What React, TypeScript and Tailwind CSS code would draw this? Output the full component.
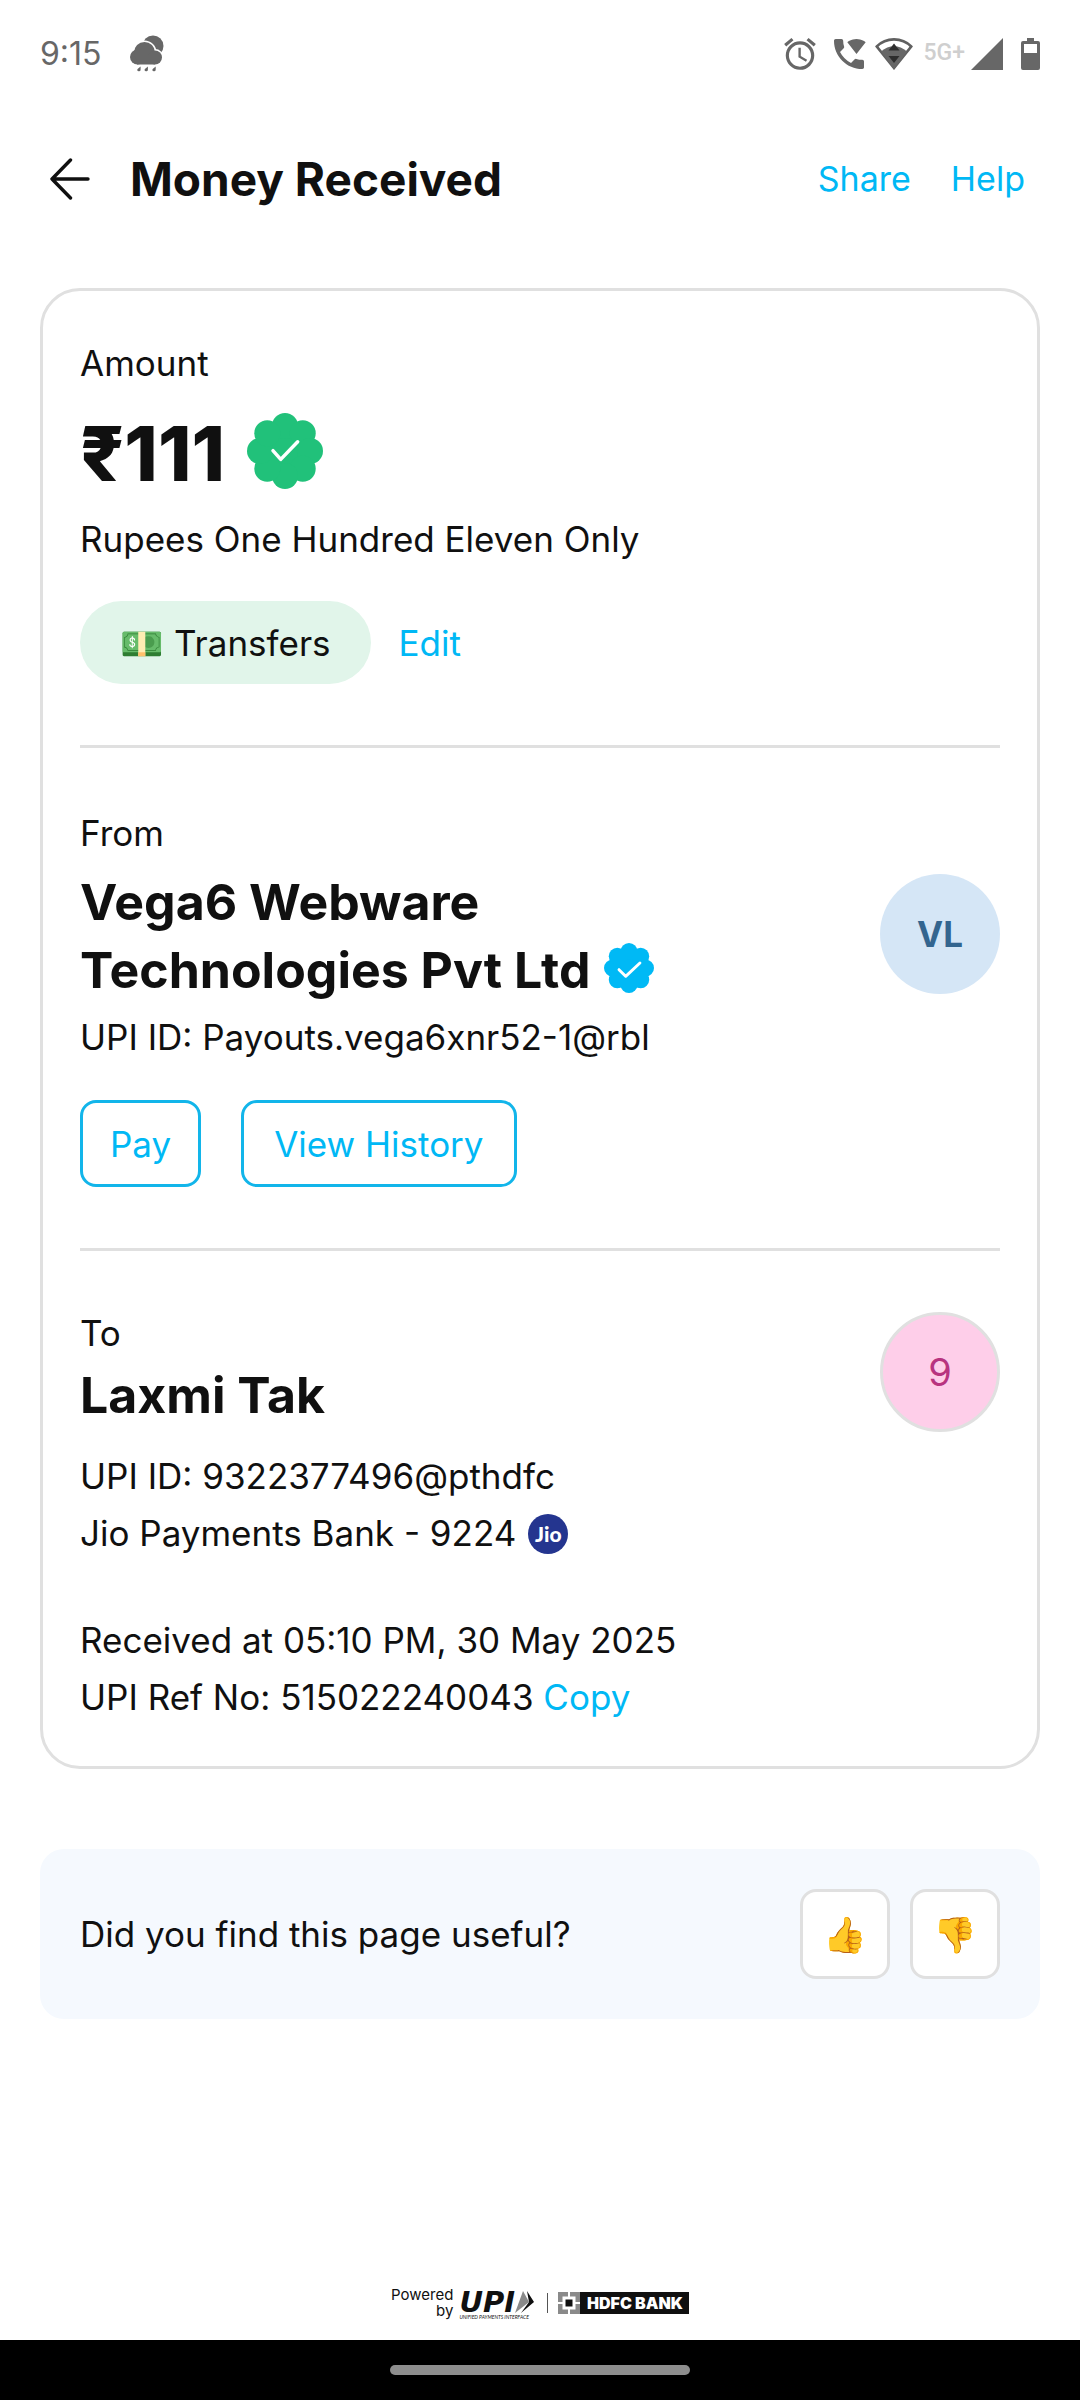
import React from "react";
import { MdAlarm, MdWifiCalling } from "react-icons/md";

function WeatherIcon() {
  return (
    <svg viewBox="0 0 34 38" className="h-[38px] w-[34px]" fill="#676767" aria-hidden="true">
      <circle cx="23" cy="11" r="10.5" />
      <g stroke="#fff" strokeWidth="3">
        <circle cx="14.5" cy="17.5" r="10.5" />
        <circle cx="25" cy="22.5" r="7" />
      </g>
      <circle cx="7.5" cy="22" r="7.5" />
      <circle cx="14.5" cy="17.5" r="10.5" />
      <circle cx="25" cy="22.5" r="7" />
      <rect x="7" y="20" width="18" height="9.5" />
      <path d="M10.6 31.5v3a1.6 1.6 0 1 1-3-.6zM17.9 31.5v3a1.6 1.6 0 1 1-3-.6zM25.7 31.5v3a1.6 1.6 0 1 1-3-.6z" />
    </svg>
  );
}

function WifiIcon() {
  return (
    <svg viewBox="0 0 38 32" className="h-8 w-[38px]" aria-hidden="true">
      <path d="M1.8 8.5C11 -1 27 -1 36.2 8.5L19 30z" fill="#fff" stroke="#606060" strokeWidth="2.6" />
      <path d="M6 13.5C14 6.5 24 6.5 32 13.5L19 31z" fill="#676767" />
      <path d="M19 5.5l5.5 7h-11zM13.5 18h11L19 25z" fill="#2e2e2e" />
    </svg>
  );
}

function SignalIcon() {
  return (
    <svg viewBox="0 0 32 32" className="h-8 w-8" fill="#676767" aria-hidden="true">
      <path d="M32 0v32H0z" />
    </svg>
  );
}

function BatteryIcon() {
  return (
    <svg viewBox="0 0 19 32" className="h-8 w-[19px]" aria-hidden="true">
      <path d="M6 0h7v3h4a2 2 0 0 1 2 2v25a2 2 0 0 1-2 2H2a2 2 0 0 1-2-2V5a2 2 0 0 1 2-2h4z" fill="#676767" />
      <path d="M3 6h13v9H3z" fill="#fff" />
    </svg>
  );
}

function BackArrow() {
  return (
    <svg viewBox="0 0 40 42" className="h-[42px] w-10" fill="none" stroke="#101010" strokeWidth="3.4" strokeLinecap="round" strokeLinejoin="round" aria-hidden="true">
      <path d="M38 21H2M20.5 2L2 21l18.5 19" />
    </svg>
  );
}

const petals = [
  [24, 8.2], [35.2, 12.8], [39.8, 24], [35.2, 35.2], [24, 39.8], [12.8, 35.2], [8.2, 24], [12.8, 12.8],
];

function Badge({ className, fill, tick, weight }: { className: string; fill: string; tick: string; weight: number }) {
  return (
    <svg viewBox="0 0 48 48" className={className} role="img" aria-label="Verified">
      <g fill={fill}>
        <circle cx="24" cy="24" r="18" />
        {petals.map(([x, y]) => (
          <circle key={x + "-" + y} cx={x} cy={y} r="8.2" />
        ))}
      </g>
      <path d={tick} fill="none" stroke="#fff" strokeWidth={weight} strokeLinecap="round" strokeLinejoin="round" />
    </svg>
  );
}

function Divider() {
  return <hr className="h-[3px] border-0 bg-[#e0e0e0]" />;
}

function PoweredBy() {
  return (
    <div className="flex items-center justify-center">
      <p className="text-right text-[15px] leading-4">
        Powered
        <br />
        by
      </p>
      <div className="ml-[6px] flex flex-col pt-1">
        <div className="flex items-center">
          <span className="font-['DejaVu_Sans'] text-[29px] leading-6 font-bold italic">UPI</span>
          <svg viewBox="0 0 20 22" className="h-[22px] w-5" aria-hidden="true">
            <path d="M8 0l6 11L0 22z" fill="#8a8a8a" />
            <path d="M12 0l7 11L6 22l8-11z" fill="#101010" />
          </svg>
        </div>
        <span className="font-['Lato'] text-[5px] leading-[6px] whitespace-nowrap italic">UNIFIED PAYMENTS INTERFACE</span>
      </div>
      <div className="ml-3 h-5 w-px bg-[#555]" />
      <div className="ml-[10px] flex h-[22px] items-center bg-[#101010] pr-[6px]">
        <svg viewBox="0 0 22 22" className="mr-[7px] size-[22px]" aria-hidden="true">
          <path d="M0 0h22v22H0z" fill="#8a8a8a" />
          <path d="M10 0h2v22h-2zM0 10h22v2H0zM4.5 4.5h13v13h-13z" fill="#fff" />
          <path d="M7.5 7.5h7v7h-7z" fill="#101010" />
        </svg>
        <span className="text-base leading-[22px] font-black text-white">HDFC BANK</span>
      </div>
    </div>
  );
}

export default function App() {
  return (
    <div className="flex min-h-screen flex-col bg-white font-['Inter',sans-serif] text-[35px] leading-[56px] text-[#101010]">
      <div className="flex h-[108px] items-center justify-between px-10 text-[#676767]">
        <div className="flex items-center gap-7">
          <span className="text-[32px]">9:15</span>
          <WeatherIcon />
        </div>
        <div className="flex items-center">
          <MdAlarm className="size-[38px]" />
          <MdWifiCalling className="ml-[10px] size-10" />
          <span className="ml-[6px]"><WifiIcon /></span>
          <span className="ml-[10px] self-start font-['Roboto'] text-[23px] leading-[38px] font-medium text-[#cfcfcf]">5G+</span>
          <span className="ml-[6px]"><SignalIcon /></span>
          <span className="ml-[18px]"><BatteryIcon /></span>
        </div>
      </div>

      <header className="flex h-[142px] items-center justify-between pr-[55px] pl-[50px]">
        <div className="flex items-center gap-10">
          <button type="button" aria-label="Back"><BackArrow /></button>
          <h1 className="text-[46px] font-bold">Money Received</h1>
        </div>
        <nav className="flex gap-10 text-[34px] text-[#00b8f5]">
          <button type="button">Share</button>
          <button type="button">Help</button>
        </nav>
      </header>

      <main className="mx-10 mt-[38px]">
        <article className="rounded-[40px] border-[3px] border-[#e0e0e0] px-[37px] pt-11 pb-10">
          <section>
            <p>Amount</p>
            <div className="mt-[22px] flex items-center gap-[22px]">
              <span className="pt-1 text-[76px] leading-[72px] font-extrabold">₹111</span>
              <Badge className="size-[76px]" fill="#21c17a" tick="M16.4 23.8L21.3 29.3L32 18.2" weight={2.2} />
            </div>
            <p className="mt-[22px]">Rupees One Hundred Eleven Only</p>
            <div className="mt-[34px] flex items-center gap-7">
              <span className="flex h-[83px] items-center gap-[10px] rounded-full bg-[#e1f5ea] px-10">
                <span aria-hidden="true">💵</span>
                Transfers
              </span>
              <button type="button" className="text-[#00b8f5]">Edit</button>
            </div>
          </section>

          <div className="mt-[61px] mb-[57px]"><Divider /></div>

          <section>
            <div className="flex items-start justify-between">
              <div>
                <p>From</p>
                <h2 className="mt-[7px] max-w-[640px] text-[50px] leading-[68px] font-bold">
                  Vega6 Webware Technologies Pvt Ltd
                  <Badge className="mb-3 ml-[14px] inline-block size-[50px]" fill="#00b9f5" tick="M14.4 25.6L20.8 32L34.5 19.2" weight={2.8} />
                </h2>
              </div>
              <div className="mt-[69px] flex size-[120px] items-center justify-center rounded-full bg-[#d5e6f6] text-[35px] font-bold text-[#33658f]">VL</div>
            </div>
            <p className="mt-1">UPI ID: Payouts.vega6xnr52-1@rbl</p>
            <div className="mt-[35px] flex gap-10 text-[#00b8f5]">
              <button type="button" className="h-[87px] rounded-2xl border-[3px] border-[#12b5ea] px-[27px]">Pay</button>
              <button type="button" className="h-[87px] rounded-2xl border-[3px] border-[#12b5ea] px-[30px]">View History</button>
            </div>
          </section>

          <div className="mt-[61px] mb-[54px]"><Divider /></div>

          <section>
            <div className="flex items-start justify-between">
              <div>
                <p>To</p>
                <h2 className="text-[50px] leading-[68px] font-bold">Laxmi Tak</h2>
              </div>
              <div className="mt-[7px] flex size-[120px] items-center justify-center rounded-full border-[3px] border-[#e0e0e0] bg-[#fecee9] text-[38px] text-[#b8337f]">9</div>
            </div>
            <div className="mt-4 leading-[57px]">
              <p>UPI ID: 9322377496@pthdfc</p>
              <p className="flex items-center gap-3">
                Jio Payments Bank - 9224
                <span className="flex size-10 items-center justify-center rounded-full bg-[#24358f] font-['Lato'] text-[21px] leading-10 font-black text-white">Jio</span>
              </p>
            </div>
            <div className="mt-[50px] leading-[57px]">
              <p>Received at 05:10 PM, 30 May 2025</p>
              <p>
                UPI Ref No: 515022240043{" "}
                <button type="button" className="text-[#00b8f5]">Copy</button>
              </p>
            </div>
          </section>
        </article>

        <section className="mt-20 flex items-center justify-between rounded-3xl bg-[#f5f9fe] p-10">
          <p>Did you find this page useful?</p>
          <div className="flex gap-5">
            <button type="button" aria-label="Yes, useful" className="size-[90px] rounded-2xl border-[3px] border-[#e0e0e0] bg-white">👍</button>
            <button type="button" aria-label="No, not useful" className="size-[90px] rounded-2xl border-[3px] border-[#e0e0e0] bg-white">👎</button>
          </div>
        </section>
      </main>

      <footer className="mt-auto">
        <div className="pb-5"><PoweredBy /></div>
        <div className="flex h-[60px] items-center justify-center bg-black">
          <div className="h-[10px] w-[300px] rounded-full bg-[#8e8e8e]" />
        </div>
      </footer>
    </div>
  );
}
